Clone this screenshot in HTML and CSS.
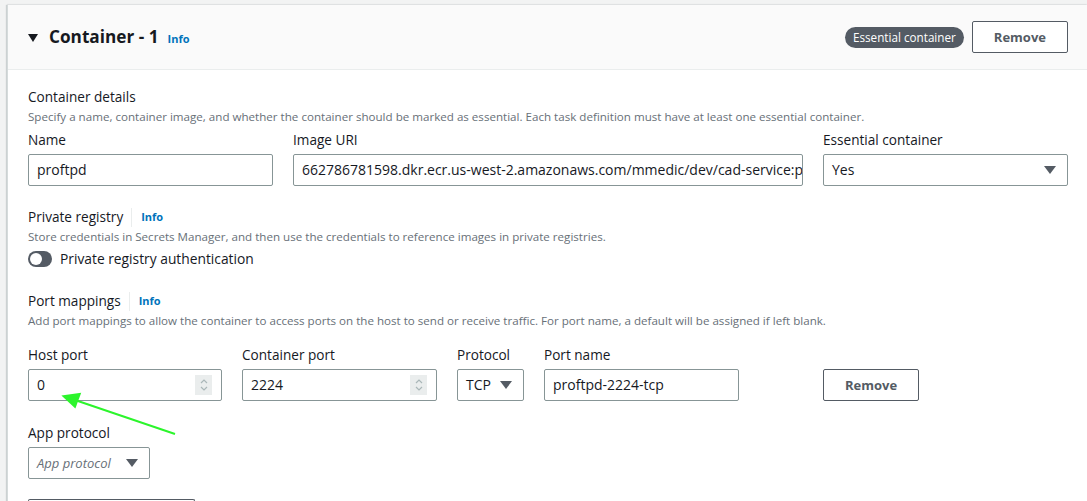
FILE: index.html
```html
<!DOCTYPE html>
<html>
<head>
<meta charset="utf-8">
<link rel="stylesheet" href="styles.css">
</head>
<body>
<div class="page">
  <div class="card">
    <div class="card-header">
      <div class="title">
        <span class="caret"></span>
        <h2>Container - 1</h2>
        <a class="info">Info</a>
      </div>
      <div class="actions">
        <span class="badge">Essential container</span>
        <button class="btn">Remove</button>
      </div>
    </div>
    <div class="card-body">
      <div class="section">
        <div class="sec-title">Container details</div>
        <div class="sec-desc">Specify a name, container image, and whether the container should be marked as essential. Each task definition must have at least one essential container.</div>
        <div class="grid3">
          <div class="field">
            <label>Name</label>
            <div class="input">proftpd</div>
          </div>
          <div class="field">
            <label>Image URI</label>
            <div class="input clip">662786781598.dkr.ecr.us-west-2.amazonaws.com/mmedic/dev/cad-service:p</div>
          </div>
          <div class="field">
            <label>Essential container</label>
            <div class="input select"><span>Yes</span><span class="tri"></span></div>
          </div>
        </div>
      </div>

      <div class="section gap-top">
        <div class="sec-title">Private registry <span class="sep"></span><a class="info">Info</a></div>
        <div class="sec-desc">Store credentials in Secrets Manager, and then use the credentials to reference images in private registries.</div>
        <div class="toggle-row">
          <span class="toggle"><span class="knob"></span></span>
          <span>Private registry authentication</span>
        </div>
      </div>

      <div class="section gap-top2">
        <div class="sec-title">Port mappings <span class="sep"></span><a class="info">Info</a></div>
        <div class="sec-desc">Add port mappings to allow the container to access ports on the host to send or receive traffic. For port name, a default will be assigned if left blank.</div>
        <div class="ports">
          <div class="field w-host">
            <label>Host port</label>
            <div class="input number"><span>0</span><span class="stepper"><svg width="8" height="14" viewBox="0 0 8 14"><path d="M1 5 L4 2 L7 5 M1 9 L4 12 L7 9" fill="none" stroke="#aab7b8" stroke-width="1.2"/></svg></span></div>
          </div>
          <div class="field w-cport">
            <label>Container port</label>
            <div class="input number"><span>2224</span><span class="stepper"><svg width="8" height="14" viewBox="0 0 8 14"><path d="M1 5 L4 2 L7 5 M1 9 L4 12 L7 9" fill="none" stroke="#aab7b8" stroke-width="1.2"/></svg></span></div>
          </div>
          <div class="field w-proto">
            <label>Protocol</label>
            <div class="input select"><span>TCP</span><span class="tri"></span></div>
          </div>
          <div class="field w-pname">
            <label>Port name</label>
            <div class="input">proftpd-2224-tcp</div>
          </div>
          <div class="remove-cell">
            <button class="btn">Remove</button>
          </div>
        </div>
        <div class="field app">
          <label>App protocol</label>
          <div class="input select app-select"><span class="ph">App protocol</span><span class="tri"></span></div>
        </div>
        <div class="next-box"></div>
      </div>
    </div>
  </div>
  <svg class="arrow" width="130" height="50" viewBox="0 0 130 50">
    <line x1="117" y1="45" x2="14" y2="10" stroke="#2cf52c" stroke-width="2"/>
    <polygon points="4,5 24,5 16,20" fill="#2cf52c" transform="rotate(-8 14 10)"/>
  </svg>
</div>
</body>
</html>
```

FILE: styles.css
```css
* { box-sizing: border-box; }
html, body { margin: 0; padding: 0; }
body {
  background: #f2f3f3;
  font-family: "Open Sans", "Noto Sans", Arial, sans-serif;
  color: #16191f;
  font-size: 14px;
  line-height: 20px;
  overflow: hidden;
  height: 501px;
}
.page {
  position: relative;
  padding: 5px 0 0 7px;
}
.card {
  background: #fff;
  border-left: 1px solid #d5dbdb;
  box-shadow: -1px 0 1px rgba(0,28,36,0.15), 0 -1px 1px rgba(0,28,36,0.05);
}
.card-header {
  height: 65px;
  background: #fafafa;
  border-bottom: 1px solid #eaeded;
  display: flex;
  align-items: center;
  justify-content: space-between;
  padding: 0 19px 0 20px;
}
.title { display: flex; align-items: center; }
.caret {
  width: 0; height: 0;
  border-left: 5px solid transparent;
  border-right: 5px solid transparent;
  border-top: 8px solid #16191f;
  margin: 2px 11px 0 0;
}
h2 {
  margin: 0;
  font-size: 17.2px;
  font-weight: 700;
  line-height: 24px;
}
.info {
  color: #0073bb;
  font-size: 11px;
  font-weight: 700;
  margin-left: 9px;
  margin-top: 4px;
}
.sec-title .info { margin-left: 9px; margin-top: 0; }
.actions { display: flex; align-items: center; gap: 8px; }
.badge {
  background: #545b64;
  color: #fff;
  font-size: 11.7px;
  line-height: 21px;
  padding: 0 8px;
  border-radius: 11px;
}
.btn {
  font-family: inherit;
  background: #fff;
  border: 1px solid #545b64;
  border-radius: 2px;
  color: #545b64;
  font-weight: 700;
  font-size: 13px;
  height: 32px;
  padding: 0 21px;
}
.card-body { padding: 17px 20px 0 20px; }
.sec-title {
  font-size: 13.6px;
  line-height: 20px;
  display: flex;
  align-items: center;
}
.sep {
  display: inline-block;
  width: 1px;
  height: 19px;
  background: #eaeded;
  margin-left: 8px;
}
.sec-desc {
  font-size: 11.6px;
  line-height: 16px;
  color: #687078;
  margin-top: 2px;
}
.grid3 {
  display: grid;
  grid-template-columns: 245px 510px 245px;
  gap: 20px;
  margin-top: 5px;
}
.field label {
  display: block;
  font-size: 13.6px;
  line-height: 20px;
  margin-bottom: 4px;
}
.input {
  height: 32px;
  border: 1px solid #879596;
  border-radius: 2px;
  padding: 0 8px;
  display: flex;
  align-items: center;
  font-size: 14px;
  white-space: nowrap;
  overflow: hidden;
}
.select { justify-content: space-between; padding-right: 11px; }
.tri {
  flex: none;
  width: 0; height: 0;
  border-left: 6px solid transparent;
  border-right: 6px solid transparent;
  border-top: 8px solid #545b64;
}
.gap-top { margin-top: 21px; }
.gap-top2 { margin-top: 22px; }
.toggle-row {
  display: flex;
  align-items: center;
  gap: 8px;
  margin-top: 4px;
  font-size: 13.8px;
}
.toggle {
  width: 24px; height: 16px;
  border-radius: 8px;
  background: #545b64;
  display: flex;
  align-items: center;
  padding: 0 2px;
}
.knob { width: 12px; height: 12px; border-radius: 50%; background: #fff; }
.ports {
  display: flex;
  gap: 20px;
  margin-top: 16px;
}
.w-host { width: 194px; }
.w-cport { width: 195px; }
.w-proto { width: 67px; }
.w-pname { width: 195px; }
.remove-cell { margin-left: 64px; padding-top: 24px; }
.number { justify-content: space-between; padding-right: 9px; }
.stepper {
  width: 17px; height: 20px;
  background: #eaeded;
  display: flex;
  align-items: center;
  justify-content: center;
}
.app { margin-top: 22px; width: 122px; }
.ph { font-style: italic; color: #687078; font-size: 13px; }
.next-box {
  margin-top: 20px;
  width: 167px;
  height: 10px;
  border: 1px solid #545b64;
  border-bottom: none;
  border-radius: 2px 2px 0 0;
}
.arrow { position: absolute; left: 58px; top: 389px; }
```
